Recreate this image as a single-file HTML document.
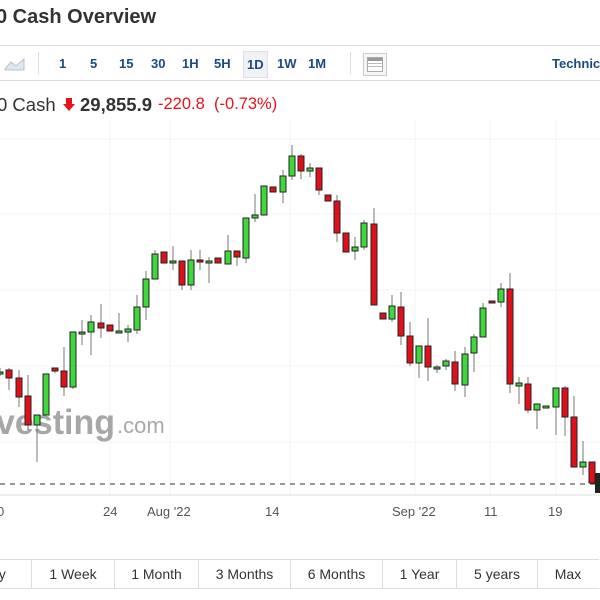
<!DOCTYPE html>
<html><head><meta charset="utf-8"><style>
body{margin:0;width:600px;height:600px;overflow:hidden;background:#fff;font-family:"Liberation Sans",Arial,sans-serif;position:relative}
.a{position:absolute;white-space:nowrap}
</style></head><body>
<div class="a" style="left:-4px;top:6px;font-size:20px;font-weight:bold;color:#333">0 Cash Overview</div>
<div class="a" style="left:0;top:45px;width:600px;height:34px;border-top:1px solid #ddd;border-bottom:1px solid #ddd"></div>
<svg class="a" style="left:4px;top:55px" width="22" height="16"><path d="M1 14 L7 7 L12 11 L20 4 L20 15 L1 15Z" fill="#dfe6ee" stroke="#b7c3d0"/></svg>
<div class="a" style="left:38px;top:52px;width:1px;height:22px;background:#ddd"></div>
<div class="a" style="left:0;top:56px;font-size:13px;font-weight:bold;color:#1c4a84">
<span class="a" style="left:59px">1</span><span class="a" style="left:90px">5</span><span class="a" style="left:119px">15</span><span class="a" style="left:151px">30</span><span class="a" style="left:182px">1H</span><span class="a" style="left:214px">5H</span><span class="a" style="left:243px;top:-5px;padding:5px 3px;background:#f0f2f5;border:1px solid #dde">1D</span><span class="a" style="left:277px">1W</span><span class="a" style="left:308px">1M</span><span class="a" style="left:552px">Technic</span></div>
<div class="a" style="left:350px;top:52px;width:1px;height:22px;background:#ddd"></div>
<div class="a" style="left:363px;top:53px;width:22px;height:21px;border:1px solid #ccc;background:#f5f5f5"><div style="margin:3px;height:13px;border:1px solid #aaa;background:linear-gradient(#999 0 3px,#fff 3px 5px,#bbb 5px 6px,#fff 6px 8px,#bbb 8px 9px,#fff 9px)"></div></div>
<div class="a" style="left:-3px;top:94px;font-size:18.5px;color:#333">0 Cash</div>
<svg class="a" style="left:63px;top:98px" width="12" height="13"><path d="M3 0h6v6h3L6 13 0 6h3z" fill="#e8131b"/></svg>
<div class="a" style="left:80px;top:94px;font-size:18.5px;font-weight:bold;color:#333">29,855.9</div>
<div class="a" style="left:158px;top:95px;font-size:16.5px;color:#e8131b">-220.8 &nbsp;(-0.73%)</div>
<svg class="a" style="left:0;top:120px" width="600" height="420">
<g stroke="#f3f3f3">
<line x1="0" y1="19" x2="600" y2="19"/><line x1="0" y1="94" x2="600" y2="94"/><line x1="0" y1="170" x2="600" y2="170"/><line x1="0" y1="246" x2="600" y2="246"/><line x1="0" y1="322" x2="600" y2="322"/>
<line x1="110" y1="0" x2="110" y2="375"/><line x1="170" y1="0" x2="170" y2="375"/><line x1="290" y1="0" x2="290" y2="375"/><line x1="415" y1="0" x2="415" y2="375"/><line x1="490" y1="0" x2="490" y2="375"/><line x1="556" y1="0" x2="556" y2="375"/>
</g>
<line x1="0" y1="375" x2="600" y2="375" stroke="#ddd"/>
<line x1="0" y1="364" x2="600" y2="364" stroke="#333" stroke-dasharray="5,5"/>
<text x="-4" y="314" font-size="35" font-weight="bold" fill="#8a8a8a" opacity="0.75" font-family="Liberation Sans" textLength="119" lengthAdjust="spacingAndGlyphs">vesting</text>
<text x="117" y="313" font-size="22" fill="#8a8a8a" opacity="0.75" font-family="Liberation Sans">.com</text>
<g id="c" stroke="#222" stroke-width="1"></g>
<rect x="595" y="353" width="8" height="20" fill="#222"/>
<g font-size="13" fill="#555" font-family="Liberation Sans">
<text x="-3" y="396">0</text><text x="103" y="396">24</text><text x="147" y="396">Aug '22</text><text x="265" y="396">14</text><text x="392" y="396">Sep '22</text><text x="484" y="396">11</text><text x="548" y="396">19</text></g>
</svg>
<div class="a" style="left:-2px;top:559px;width:600px;height:28px;border:1px solid #ddd;border-right:none;font-size:14px;color:#333;line-height:28px">
<span class="a" style="left:-8px">ay</span>
<span class="a" style="left:32px;width:82px;height:28px;border-left:1px solid #ddd;text-align:center">1 Week</span>
<span class="a" style="left:115px;width:83px;height:28px;border-left:1px solid #ddd;text-align:center">1 Month</span>
<span class="a" style="left:199px;width:91px;height:28px;border-left:1px solid #ddd;text-align:center">3 Months</span>
<span class="a" style="left:291px;width:91px;height:28px;border-left:1px solid #ddd;text-align:center">6 Months</span>
<span class="a" style="left:383px;width:73px;height:28px;border-left:1px solid #ddd;text-align:center">1 Year</span>
<span class="a" style="left:457px;width:80px;height:28px;border-left:1px solid #ddd;text-align:center">5 years</span>
<span class="a" style="left:538px;width:60px;height:28px;border-left:1px solid #ddd;text-align:center">Max</span>
</div>
<script>
var d=[[0,372,373,368,376,1],[9,370,378,368,390,0],[19,378,397,370,407,0],[28,396,425,375,430,0],[37,415,425,415,462,1],[46,374,415,374,415,1],[55,368,371,368,373,0],[64,371,387,347,396,0],[73,332,387,332,389,1],[82,332,334,320,345,1],[91,322,332,315,355,1],[101,323,328,304,338,0],[110,325,331,325,331,0],[119,331,333,313,333,1],[128,329,332,325,342,1],[137,307,330,295,334,1],[146,279,307,271,320,1],[155,254,279,250,279,1],[164,252,263,252,263,0],[173,261,263,246,270,1],[182,261,285,261,290,0],[191,260,285,250,290,1],[200,260,262,250,270,0],[209,261,263,257,283,1],[218,258,263,258,263,0],[228,251,264,235,264,1],[237,251,257,251,266,0],[246,218,258,218,263,1],[255,215,218,194,222,1],[264,186,215,186,215,1],[273,187,192,187,192,0],[283,176,192,170,203,1],[292,156,176,145,180,1],[301,156,171,154,179,0],[310,168,171,163,177,1],[319,168,190,168,195,0],[328,195,201,195,201,0],[337,201,233,195,242,0],[346,233,252,233,252,0],[355,247,251,237,260,1],[364,223,247,220,250,1],[374,224,305,208,305,0],[383,313,319,313,319,0],[392,306,319,295,322,1],[401,307,336,292,345,0],[410,336,363,322,366,0],[419,346,363,346,378,1],[428,346,367,318,381,0],[437,367,369,365,373,1],[446,361,366,359,370,1],[455,362,384,351,391,0],[465,354,385,347,397,1],[474,337,353,334,372,1],[483,308,337,303,337,1],[492,301,303,301,303,0],[501,289,302,283,307,1],[510,289,384,273,393,0],[519,383,386,377,404,1],[528,384,410,377,413,0],[537,404,410,404,429,1],[546,406,408,406,408,1],[556,388,407,388,435,1],[565,388,417,386,436,0],[574,417,467,396,467,0],[583,462,467,441,475,1],[592,462,483,462,483,0]];
var s='';d.forEach(function(c){var x=c[0];s+='<line x1="'+x+'" x2="'+x+'" y1="'+(c[3]-120)+'" y2="'+(c[4]-120)+'" stroke="#777"/>';var h=Math.max(c[2]-c[1],2);s+='<rect x="'+(x-3)+'" y="'+(c[1]-120)+'" width="6" height="'+h+'" fill="'+(c[5]?'#3ed83a':'#e0101a')+'"/>';});
document.getElementById('c').innerHTML=s;
</script>
</body></html>
